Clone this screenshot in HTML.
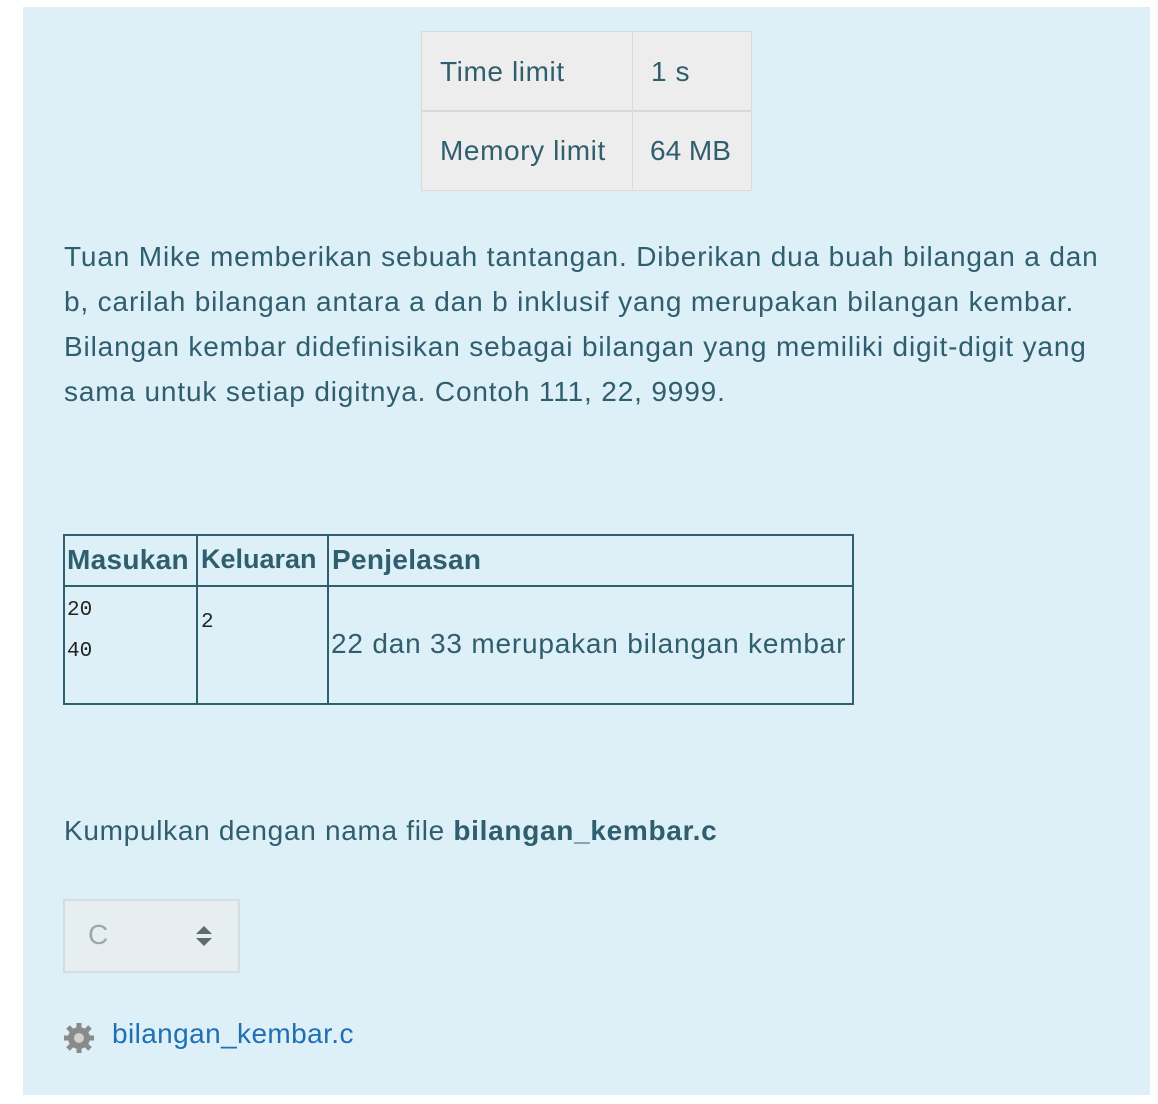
<!DOCTYPE html>
<html><head><meta charset="utf-8"><style>
body{margin:0;width:1158px;height:1104px;background:#fff;position:relative;overflow:hidden;font-family:"Liberation Sans",sans-serif;color:#2f5e6e}
#p{position:absolute;left:23px;top:7px;width:1127px;height:1088px;background:#def0f7}
.a{position:absolute;white-space:nowrap}
.m{font-size:28px;letter-spacing:0.6px}
</style></head><body>
<div id="p"></div>
<div class="a" style="left:421px;top:31px;width:329px;height:158px;background:#ededed;border:1px solid #d9d9d9"></div>
<div class="a" style="left:632px;top:31px;width:1px;height:158px;background:#d9d9d9"></div>
<div class="a" style="left:421px;top:110px;width:330px;height:2px;background:#d9d9d9"></div>
<div class="a m" style="left:440px;top:56px">Time limit</div>
<div class="a m" style="left:651px;top:56px">1 s</div>
<div class="a m" style="left:440px;top:135px">Memory limit</div>
<div class="a m" style="left:650px;top:135px;letter-spacing:0">64 MB</div>
<div class="a" style="left:64px;top:234px;line-height:45px;font-size:28px;letter-spacing:0.85px">Tuan Mike memberikan sebuah tantangan. Diberikan dua buah bilangan a dan<br>b, carilah bilangan antara a dan b inklusif yang merupakan bilangan kembar.<br>Bilangan kembar didefinisikan sebagai bilangan yang memiliki digit-digit yang<br>sama untuk setiap digitnya. Contoh 111, 22, 9999.</div>
<div class="a" style="left:63px;top:534px;width:787px;height:167px;border:2px solid #30606f"></div>
<div class="a" style="left:196px;top:534px;width:2px;height:169px;background:#30606f"></div>
<div class="a" style="left:327px;top:534px;width:2px;height:169px;background:#30606f"></div>
<div class="a" style="left:63px;top:585px;width:789px;height:2px;background:#30606f"></div>
<div class="a" style="left:67px;top:544px;font-size:28px;font-weight:bold;letter-spacing:0.3px">Masukan</div>
<div class="a" style="left:201px;top:544px;font-size:27px;font-weight:bold;letter-spacing:0px">Keluaran</div>
<div class="a" style="left:332px;top:544px;font-size:28px;font-weight:bold;letter-spacing:0.3px">Penjelasan</div>
<div class="a" style="left:67px;top:590px;font-family:'Liberation Mono',monospace;font-size:21px;line-height:41px;color:#222">20<br>40</div>
<div class="a" style="left:201px;top:611px;font-family:'Liberation Mono',monospace;font-size:21px;color:#222">2</div>
<div class="a" style="left:331px;top:628px;font-size:28px;letter-spacing:0.8px">22 dan 33 merupakan bilangan kembar</div>
<div class="a" style="left:64px;top:815px;font-size:28px;letter-spacing:0.7px">Kumpulkan dengan nama file <b>bilangan_kembar.c</b></div>
<div class="a" style="left:63px;top:899px;width:173px;height:70px;background:#e6eef2;border:2px solid #d3dee3"></div>
<div class="a" style="left:88px;top:919px;font-size:28px;color:#9aa7ad">C</div>
<svg class="a" style="left:195px;top:925px" width="20" height="22"><path d="M1 9 L9 1 L17 9Z M1 13 L9 21 L17 13Z" fill="#5f6a6e"/></svg>
<svg class="a" style="left:62px;top:1021px" width="34" height="34" viewBox="0 0 34 34"><g fill="#8a8a8a"><circle cx="17" cy="17" r="11"/><g stroke="#8a8a8a" stroke-width="5"><line x1="17" y1="2" x2="17" y2="32"/><line x1="2" y1="17" x2="32" y2="17"/><line x1="6" y1="6" x2="28" y2="28"/><line x1="28" y1="6" x2="6" y2="28"/></g></g><circle cx="17" cy="17" r="5" fill="#d0d0d0"/></svg>
<div class="a" style="left:112px;top:1018px;font-size:28px;letter-spacing:0.4px;color:#1f6fb5">bilangan_kembar.c</div>
</body></html>
